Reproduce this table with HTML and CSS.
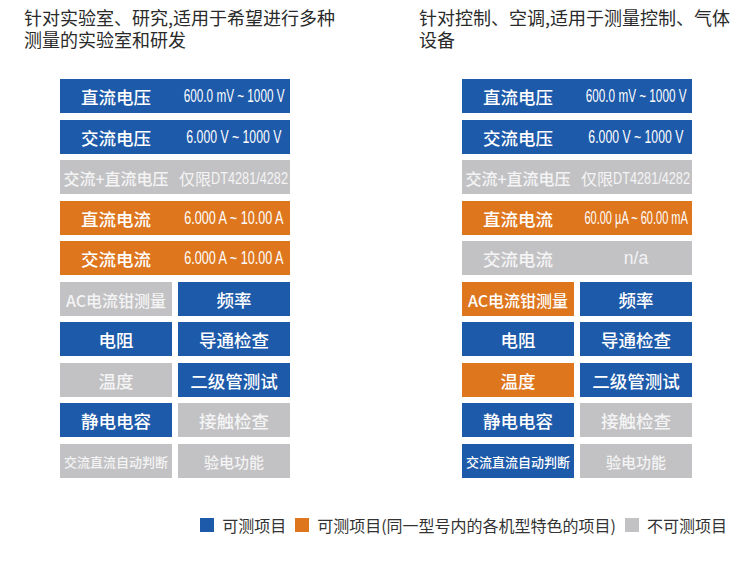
FILE: index.html
```html
<!DOCTYPE html>
<html lang="zh-CN">
<head>
<meta charset="utf-8">
<title>测量功能对比</title>
<link rel="stylesheet" href="styles.css">
</head>
<body>
<div class="page">
  <div class="columns">
    <section class="col col-left">
      <h2 class="heading">针对实验室、研究,适用于希望进行多种测量的实验室和研发</h2>
      <div class="panel">
        <div class="bar blue"><span class="cell">直流电压</span><span class="cell val"><span class="cond c67">600.0 mV ~ 1000 V</span></span></div>
        <div class="bar blue"><span class="cell">交流电压</span><span class="cell val"><span class="cond c70">6.000 V ~ 1000 V</span></span></div>
        <div class="bar gray"><span class="cell sm">交流+直流电压</span><span class="cell val"><span class="cjk">仅限</span><span class="cond c77">DT4281/4282</span></span></div>
        <div class="bar orange"><span class="cell">直流电流</span><span class="cell val"><span class="cond c72">6.000 A ~ 10.00 A</span></span></div>
        <div class="bar orange"><span class="cell">交流电流</span><span class="cell val"><span class="cond c72">6.000 A ~ 10.00 A</span></span></div>
        <div class="pair"><span class="box gray sm">AC电流钳测量</span><span class="box blue">频率</span></div>
        <div class="pair"><span class="box blue">电阻</span><span class="box blue">导通检查</span></div>
        <div class="pair"><span class="box gray">温度</span><span class="box blue">二级管测试</span></div>
        <div class="pair"><span class="box blue">静电电容</span><span class="box gray">接触检查</span></div>
        <div class="pair"><span class="box gray xs">交流直流自动判断</span><span class="box gray md">验电功能</span></div>
      </div>
    </section>
    <section class="col col-right">
      <h2 class="heading">针对控制、空调,适用于测量控制、气体设备</h2>
      <div class="panel">
        <div class="bar blue"><span class="cell">直流电压</span><span class="cell val"><span class="cond c67">600.0 mV ~ 1000 V</span></span></div>
        <div class="bar blue"><span class="cell">交流电压</span><span class="cell val"><span class="cond c70">6.000 V ~ 1000 V</span></span></div>
        <div class="bar gray"><span class="cell sm">交流+直流电压</span><span class="cell val"><span class="cjk">仅限</span><span class="cond c77">DT4281/4282</span></span></div>
        <div class="bar orange"><span class="cell">直流电流</span><span class="cell val"><span class="cond c63">60.00 µA ~ 60.00 mA</span></span></div>
        <div class="bar gray"><span class="cell">交流电流</span><span class="cell val na">n/a</span></div>
        <div class="pair"><span class="box orange sm">AC电流钳测量</span><span class="box blue">频率</span></div>
        <div class="pair"><span class="box blue">电阻</span><span class="box blue">导通检查</span></div>
        <div class="pair"><span class="box orange">温度</span><span class="box blue">二级管测试</span></div>
        <div class="pair"><span class="box blue">静电电容</span><span class="box gray">接触检查</span></div>
        <div class="pair"><span class="box blue xs">交流直流自动判断</span><span class="box gray md">验电功能</span></div>
      </div>
    </section>
  </div>
  <div class="legend">
    <span class="key"><span class="swatch blue"></span>可测项目</span>
    <span class="key"><span class="swatch orange"></span>可测项目(同一型号内的各机型特色的项目)</span>
    <span class="key"><span class="swatch gray"></span>不可测项目</span>
  </div>
</div>
</body>
</html>
```
FILE: styles.css
```css
* { box-sizing: border-box; }
html, body { margin: 0; padding: 0; background: #ffffff; }
body {
  font-family: "Noto Sans CJK SC", "Noto Sans", sans-serif;
  color: #2a2a2a;
}
.page {
  width: 750px;
  height: 567px;
  display: flex;
  flex-direction: column;
}
.columns {
  display: grid;
  grid-template-columns: 395px 355px;
}
.col {
  padding-top: 6px;
  padding-left: 24px;
}
.heading {
  margin: 0;
  max-width: 320px;
  font-size: 18px;
  line-height: 22px;
  font-weight: 400;
  color: #2a2a2a;
}
.panel {
  margin-top: 29px;
  width: 230px;
  display: flex;
  flex-direction: column;
  gap: 6.5px;
}
.col-left .panel { margin-left: 36px; }
.col-right .panel { margin-left: 43px; }

.blue { background: #1e5aaa; }
.orange { background: #de761e; }
.gray { background: #c2c2c4; }

.bar,
.pair {
  height: 34px;
  display: grid;
  grid-template-columns: 112px 112px;
  column-gap: 6px;
}
.cell, .box {
  display: flex;
  align-items: center;
  justify-content: center;
  white-space: nowrap;
  color: #ffffff;
  font-size: 17.5px;
  font-weight: 500;
  line-height: 1;
  padding-top: 2px;
}
.gray.bar .cell, .box.gray { color: #f4f4f5; }
.sm { font-size: 16px; }
.md { font-size: 15px; }
.xs { font-size: 13px; }
.val {
  font-weight: 400;
  font-size: 17.5px;
}
.cjk { font-size: 16px; font-weight: 400; }
.cond {
  display: inline-block;
  font-family: "Liberation Sans", Arial, sans-serif;
  font-size: 17.5px;
  white-space: nowrap;
}
.c67 { transform: scaleX(0.67); }
.c70 { transform: scaleX(0.70); }
.c72 { transform: scaleX(0.72); }
.c63 { transform: scaleX(0.63); }
.c77 { font-size: 16.5px; transform: scaleX(0.77); transform-origin: left center; margin-right: -22px; }
.na {
  font-family: "Liberation Sans", Arial, sans-serif;
  font-size: 17.5px;
}

.legend {
  margin-top: 37px;
  padding-right: 23px;
  display: flex;
  justify-content: flex-end;
  align-items: center;
  gap: 9px;
  font-size: 16px;
  line-height: 20px;
  color: #333333;
}
.key {
  display: flex;
  align-items: center;
  gap: 8px;
}
.swatch {
  width: 14px;
  height: 14px;
  display: inline-block;
}
```
